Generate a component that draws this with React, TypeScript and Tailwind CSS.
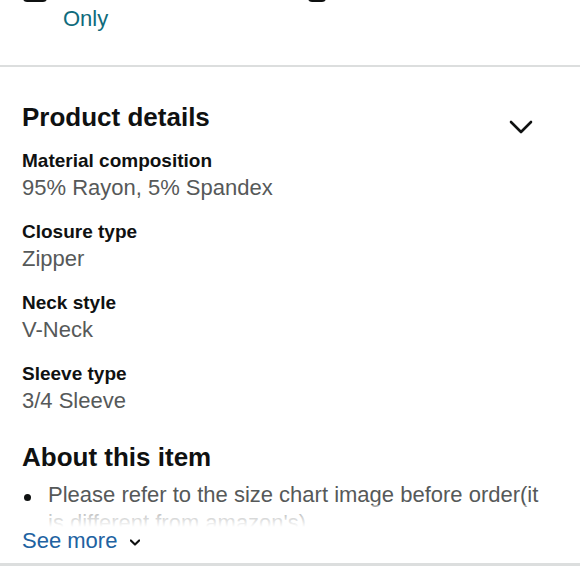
import React from "react";

const details = [
  { label: "Material composition", value: "95% Rayon, 5% Spandex" },
  { label: "Closure type", value: "Zipper" },
  { label: "Neck style", value: "V-Neck" },
  { label: "Sleeve type", value: "3/4 Sleeve" },
];

function Chevron({ className, stroke = 2.6 }: { className?: string; stroke?: number }) {
  return (
    <svg viewBox="0 0 24 14" fill="none" className={className}>
      <path d="M2 2 L12 12 L22 2" stroke="#0f1111" strokeWidth={stroke} strokeLinecap="round" strokeLinejoin="round" />
    </svg>
  );
}

export default function App() {
  return (
    <div className="w-[580px] h-[580px] overflow-hidden bg-white font-['Liberation_Sans',Arial,sans-serif] text-[#0f1111]">
      {/* Filter row, scrolled off the top */}
      <div className="h-[65px] overflow-hidden">
        <div className="-mt-[23px] flex pl-[23px]">
          <div className="flex w-[285px]">
            <div className="w-[24px] h-[25px] rounded-[4px] bg-[#0f1111] shrink-0" />
            <div className="ml-[16px] text-[22px] leading-[28px] text-[#0f6b7c]">
              <div>Amazon Brands</div>
              <div>Only</div>
            </div>
          </div>
          <div className="flex">
            <div className="w-[18px] h-[25px] rounded-[4px] bg-[#0f1111] shrink-0" />
            <div className="ml-[22px] text-[22px] leading-[28px] text-[#0f6b7c]">
              <div>Small Business</div>
            </div>
          </div>
        </div>
      </div>

      <div className="h-[2px] bg-[#dcdede]" />

      {/* Product details */}
      <div className="pl-[22px] pr-[47px] pt-[34px]">
        <div className="flex justify-between">
          <h2 className="text-[26px] leading-[32px] font-bold">Product details</h2>
          <Chevron className="w-[24px] h-[14px] mt-[19px]" />
        </div>
        <div className="mt-[15px] flex flex-col gap-[18px]">
          {details.map((d) => (
            <div key={d.label}>
              <div className="text-[19px] leading-[24px] font-bold">{d.label}</div>
              <div className="mt-[1px] text-[22px] leading-[28px] text-[#565959]">{d.value}</div>
            </div>
          ))}
        </div>
      </div>

      {/* About this item */}
      <div className="pl-[22px] pr-[22px] pt-[26px]">
        <h2 className="text-[26px] leading-[32px] font-bold">About this item</h2>
        <div className="relative mt-[8px] h-[46px] overflow-hidden">
          <div className="flex">
            <span className="w-[7px] h-[7px] mt-[13px] ml-[2px] rounded-full bg-[#0f1111] shrink-0" />
            <p className="ml-[17px] text-[22px] leading-[28px] text-[#565959]">
              Please refer to the size chart image before order(it is different from amazon's)
            </p>
          </div>
          <div className="absolute left-0 right-0 bottom-0 h-[22px] bg-gradient-to-b from-white/40 to-white" />
        </div>
        <div className="flex items-center">
          <span className="text-[22px] leading-[28px] text-[#2162a1]">See more</span>
          <Chevron className="w-[10px] h-[7px] ml-[13px] mt-[3px]" stroke={5} />
        </div>
      </div>

      <div className="mt-[8px] h-[3px] bg-[#dcdede]" />
    </div>
  );
}
